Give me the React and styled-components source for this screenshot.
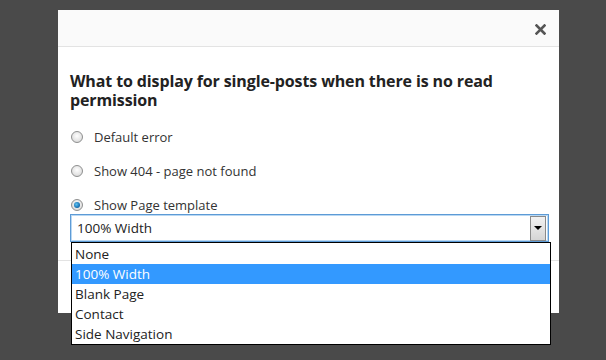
import React from "react";
import styled, { createGlobalStyle } from "styled-components";

const Global = createGlobalStyle`
  html, body { margin: 0; padding: 0; background: #4a4a4a; }
  body { font-family: "Open Sans", "Noto Sans", sans-serif; color: #222; }
`;

const Page = styled.div`
  width: 606px;
  height: 360px;
  padding: 10px 0 0 58px;
  box-sizing: border-box;
  overflow: hidden;
`;

const Modal = styled.div`
  width: 501px;
  height: 303px;
  background: #fff;
  display: flex;
  flex-direction: column;
`;

const Header = styled.div`
  height: 36px;
  background: #fafafa;
  border-bottom: 1px solid #e3e3e3;
  display: flex;
  align-items: center;
  justify-content: flex-end;
  padding-right: 13px;
  flex-shrink: 0;
`;

const CloseIcon = styled.svg`
  display: block;
  width: 11px;
  height: 11px;
  margin-top: 2px;
`;

const Body = styled.div`
  padding: 25px 10px 18px 12px;
  border-bottom: 1px solid #e3e3e3;
`;

const Title = styled.h3`
  margin: 0 0 18px;
  font-size: 16px;
  font-weight: 700;
  line-height: 19px;
  letter-spacing: -0.12px;
  color: #222;
`;

const Option = styled.label`
  display: flex;
  align-items: center;
  gap: 11px;
  height: 18px;
  margin-bottom: ${(p) => p.$gap}px;
  font-size: 13px;
  color: #333;
  padding-left: 1px;
`;

const Radio = styled.span`
  width: 12px;
  height: 12px;
  border-radius: 50%;
  box-sizing: border-box;
  border: 1px solid #8e8f8f;
  background: radial-gradient(circle at 50% 40%, #fefefe 0%, #e6e6e6 55%, #cfcfcf 100%);
  display: flex;
  align-items: center;
  justify-content: center;
  &::after {
    content: "";
    display: ${(p) => (p.$checked ? "block" : "none")};
    width: 6px;
    height: 6px;
    border-radius: 50%;
    background: radial-gradient(circle at 40% 40%, #5fc3f0 0%, #1a74b6 60%, #0a3d6b 100%);
  }
`;

const SelectWrap = styled.div`
  position: relative;
  width: 479px;
`;

const SelectBox = styled.div`
  height: 28px;
  box-sizing: border-box;
  border: 1px solid #5d9bd6;
  box-shadow: inset 0 0 0 1px #b9d8f3;
  display: flex;
  align-items: center;
  padding: 0 2px 0 6px;
  font-size: 13.5px;
  color: #222;
`;

const SelectText = styled.span`
  flex: 1;
`;

const DropButton = styled.span`
  width: 16px;
  height: 25px;
  box-sizing: border-box;
  border: 1px solid #8a8a8a;
  background: linear-gradient(to bottom, #f2f2f2, #d5d5d5);
  display: flex;
  align-items: center;
  justify-content: center;
  &::after {
    content: "";
    border-left: 4px solid transparent;
    border-right: 4px solid transparent;
    border-top: 4px solid #000;
  }
`;

const List = styled.ul`
  position: absolute;
  top: 28px;
  left: 1px;
  width: 480px;
  margin: 0;
  padding: 1px 0 0;
  list-style: none;
  background: #fff;
  border: 1px solid #000;
  box-sizing: border-box;
  z-index: 2;
`;

const Item = styled.li`
  height: 20px;
  line-height: 20px;
  padding-left: 3px;
  font-size: 13.5px;
  color: ${(p) => (p.$active ? "#fff" : "#222")};
  background: ${(p) => (p.$active ? "#3399ff" : "transparent")};
`;

const Footer = styled.div`
  flex: 1;
`;

const options = [
  { label: "Default error", gap: 16 },
  { label: "Show 404 - page not found", gap: 16 },
  { label: "Show Page template", gap: 0, checked: true },
];

const items = ["None", "100% Width", "Blank Page", "Contact", "Side Navigation"];

export default function App() {
  return (
    <Page>
      <Global />
      <Modal>
        <Header>
          <CloseIcon viewBox="0 0 11 11">
            <path d="M1.5 1.5 L9.5 9.5 M9.5 1.5 L1.5 9.5" stroke="#555" strokeWidth="2.6" strokeLinecap="square" />
          </CloseIcon>
        </Header>
        <Body>
          <Title>What to display for single-posts when there is no read permission</Title>
          {options.map((o) => (
            <Option key={o.label} $gap={o.gap}>
              <Radio $checked={o.checked} />
              {o.label}
            </Option>
          ))}
          <SelectWrap>
            <SelectBox>
              <SelectText>100% Width</SelectText>
              <DropButton />
            </SelectBox>
            <List>
              {items.map((it) => (
                <Item key={it} $active={it === "100% Width"}>
                  {it}
                </Item>
              ))}
            </List>
          </SelectWrap>
        </Body>
        <Footer />
      </Modal>
    </Page>
  );
}
